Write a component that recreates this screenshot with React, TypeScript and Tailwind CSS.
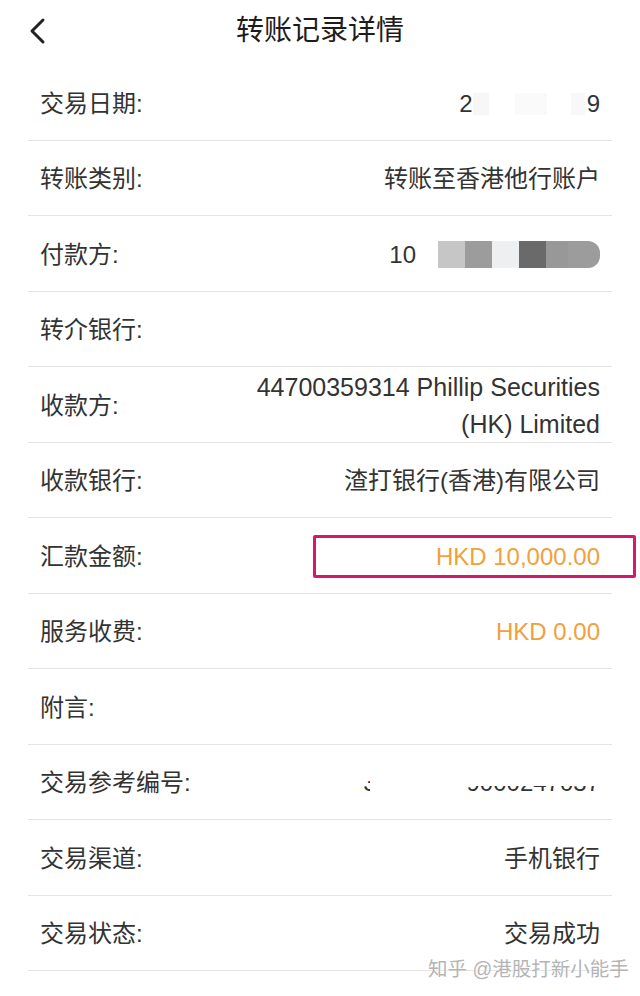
import { ReactNode } from 'react';

const font = '"Liberation Sans", "Noto Sans CJK SC", sans-serif';

function Row({ label, children, box }: { label: string; children?: ReactNode; box?: boolean }) {
  return (
    <div className="relative h-[75.5px] flex items-center justify-between border-b border-[#e4e4e4] px-3 pt-[3px]">
      <span className="text-[24px] text-[#333]">{label}</span>
      <div className="text-[24px] text-[#333] text-right">{children}</div>
      {box && (
        <div className="absolute left-[285px] right-[-24px] top-[17px] h-[43px] border-[3px] border-[#d6186c] rounded-[2px]" />
      )}
    </div>
  );
}

export default function App() {
  return (
    <div className="relative w-[640px] h-[996px] bg-white overflow-hidden" style={{ fontFamily: font }}>
      {/* Header */}
      <div className="relative h-[65px] flex items-center justify-center">
        <svg className="absolute left-[27px] top-[17px]" width="22" height="28" viewBox="0 0 22 28">
          <polyline points="16,3 5,14 16,25" fill="none" stroke="#222" strokeWidth="3" strokeLinecap="round" strokeLinejoin="round" />
        </svg>
        <h1 className="text-[28px] text-[#1c1c1c] -mt-[3px]">转账记录详情</h1>
      </div>

      <div className="px-[28px]">
        <Row label="交易日期:">
          <div className="flex items-center">
            <span>2</span>
            <span className="w-[114px] h-[22px] flex">
              <span className="w-[16px] bg-[#f7f7f7]" />
              <span className="w-[26px]" />
              <span className="w-[32px] bg-[#fafafa]" />
              <span className="w-[24px]" />
              <span className="w-[14px] bg-[#f8f8f8]" />
            </span>
            <span>9</span>
          </div>
        </Row>
        <Row label="转账类别:">转账至香港他行账户</Row>
        <Row label="付款方:">
          <div className="flex items-center">
            <span className="mr-[22px]">10</span>
            <span className="flex h-[27px]">
              <span className="w-[27px] bg-[#c6c6c6]" />
              <span className="w-[27px] bg-[#9c9c9c]" />
              <span className="w-[27px] bg-[#eeeff0]" />
              <span className="w-[27px] bg-[#6a6a6a]" />
              <span className="w-[22px] bg-[#989898]" />
              <span className="w-[32px] bg-[#9c9c9c] rounded-r-[12px]" />
            </span>
          </div>
        </Row>
        <Row label="转介银行:" />
        <Row label="收款方:">
          <div className="leading-[37px] text-[25px]">
            <div>44700359314 Phillip Securities</div>
            <div>(HK) Limited</div>
          </div>
        </Row>
        <Row label="收款银行:">渣打银行(香港)有限公司</Row>
        <Row label="汇款金额:" box>
          <span className="text-[#f2a03d]">HKD 10,000.00</span>
        </Row>
        <Row label="服务收费:">
          <span className="text-[#f2a03d]">HKD 0.00</span>
        </Row>
        <Row label="附言:" />
        <Row label="交易参考编号:">
          <div className="flex items-center">
            <span className="relative mr-[90px]">
              3
              <span className="absolute left-0 right-0 top-[9px] h-[5px] bg-white" />
              <span className="absolute left-[7px] right-0 top-0 h-full bg-white" />
            </span>
            <span className="relative">
              9000247037
              <span className="absolute left-0 right-0 top-0 h-[21px] bg-white" />
            </span>
          </div>
        </Row>
        <Row label="交易渠道:">手机银行</Row>
        <Row label="交易状态:">交易成功</Row>
      </div>

      {/* watermark */}
      <div
        className="absolute left-[428px] top-[955px] whitespace-nowrap text-[19.5px] text-[#b4b4b4]"
        style={{ textShadow: '0 0 2px #fff, 0 0 2px #fff' }}
      >
        知乎 @港股打新小能手
      </div>
    </div>
  );
}
